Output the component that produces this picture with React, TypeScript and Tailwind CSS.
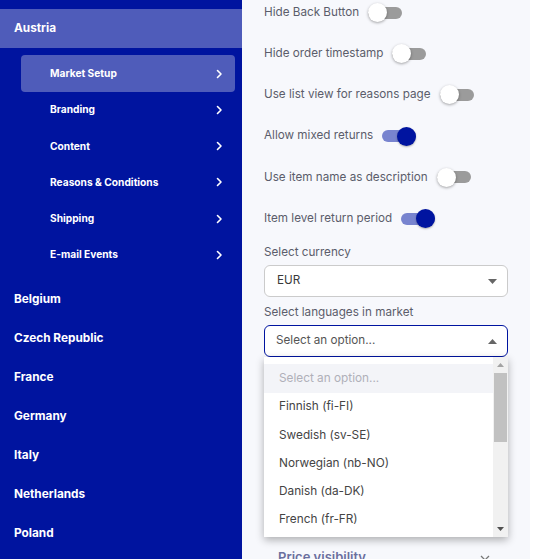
import React from "react";

const subItems = [
  "Market Setup",
  "Branding",
  "Content",
  "Reasons & Conditions",
  "Shipping",
  "E-mail Events",
];

const countries = [
  "Belgium",
  "Czech Republic",
  "France",
  "Germany",
  "Italy",
  "Netherlands",
  "Poland",
];

const toggles: { label: string; on: boolean }[] = [
  { label: "Hide Back Button", on: false },
  { label: "Hide order timestamp", on: false },
  { label: "Use list view for reasons page", on: false },
  { label: "Allow mixed returns", on: true },
  { label: "Use item name as description", on: false },
  { label: "Item level return period", on: true },
];

const languages = [
  "Finnish (fi-FI)",
  "Swedish (sv-SE)",
  "Norwegian (nb-NO)",
  "Danish (da-DK)",
  "French (fr-FR)",
];

function Chevron() {
  return (
    <svg width="7" height="10" viewBox="0 0 7 10" fill="none">
      <path d="M1.5 1.5 L5 5 L1.5 8.5" stroke="white" strokeWidth="1.6" strokeLinecap="round" strokeLinejoin="round" />
    </svg>
  );
}

function Switch({ on }: { on: boolean }) {
  return (
    <div className="relative w-[34px] h-[19px] shrink-0">
      <div
        className={
          on
            ? "absolute left-0 right-0 top-[3.5px] h-[12px] rounded-full bg-[#7884cf]"
            : "absolute left-0 right-0 top-[3.5px] h-[12px] rounded-full bg-[#9b9b9b]"
        }
      />
      <div
        className={
          on
            ? "absolute right-0 top-0 w-[19px] h-[19px] rounded-full bg-[#0014a0] shadow-[0_1px_2px_rgba(0,0,0,0.3)]"
            : "absolute left-0 top-0 w-[19px] h-[19px] rounded-full bg-white shadow-[0_1px_3px_rgba(0,0,0,0.35)]"
        }
      />
    </div>
  );
}

function Caret({ up, color }: { up?: boolean; color: string }) {
  return (
    <svg width="9" height="5" viewBox="0 0 9 5">
      <path d={up ? "M0 5 L4.5 0 L9 5 Z" : "M0 0 L4.5 5 L9 0 Z"} fill={color} />
    </svg>
  );
}

export default function App() {
  return (
    <div
      className="flex w-[535px] h-[559px] overflow-hidden"
      style={{ fontFamily: "Inter, 'Noto Sans', sans-serif" }}
    >
      {/* sidebar */}
      <aside className="w-[242px] shrink-0 bg-[#00149f] text-white pt-[9px]">
        <div className="h-[39px] bg-[#4f5cba] flex items-center pl-[14px] pt-[1px] text-[11.8px] font-bold">
          Austria
        </div>
        <ul className="mt-[7px]">
          {subItems.map((s, i) => (
            <li
              key={s}
              className={
                i === 0
                  ? "ml-[21px] w-[214px] h-[37px] rounded-[4px] bg-[#4f5cba] flex items-center justify-between pl-[29px] pr-[12px] text-[10.2px] font-bold"
                  : "ml-[21px] w-[214px] h-[36.2px] flex items-center justify-between pl-[29px] pr-[12px] text-[10.2px] font-bold"
              }
            >
              <span>{s}</span>
              <Chevron />
            </li>
          ))}
        </ul>
        <ul className="mt-[7px]">
          {countries.map((c) => (
            <li key={c} className="h-[39px] flex items-center pl-[14px] pt-[1px] text-[11.8px] font-bold">
              {c}
            </li>
          ))}
        </ul>
      </aside>

      {/* settings panel */}
      <main className="relative w-[288px] shrink-0 bg-[#f7f8fc] pl-[22px] pr-[22px] text-[#5b5d6b]">
        <div className="-mt-[8px]">
          {toggles.map((t) => (
            <div key={t.label} className="h-[41.2px] flex items-center gap-[9px] text-[11.7px]">
              <span>{t.label}</span>
              <Switch on={t.on} />
            </div>
          ))}
        </div>

        <div className="mt-[4px] leading-[18px] text-[11.7px]">Select currency</div>
        <div className="mt-[4px] h-[32px] rounded-[6px] border border-[#cbcbcb] bg-white flex items-center justify-between pl-[12px] pr-[10px] text-[11.7px] text-[#3a3a3a]">
          <span>EUR</span>
          <Caret color="#666" />
        </div>

        <div className="mt-[6px] leading-[18px] text-[11.7px]">Select languages in market</div>
        <div className="relative mt-[4px] h-[32px] rounded-[6px] border-[1.5px] border-[#0014a0] bg-white flex items-center justify-between pl-[11px] pr-[10px] text-[11.7px] text-[#555]">
          <span>Select an option...</span>
          <Caret up color="#666" />
        </div>

        <div className="mt-[191px] flex items-center justify-between pl-[14px] pr-[18px] text-[13px] font-semibold text-[#6b6f9e]">
          <span>Price visibility</span>
          <svg width="10" height="6" viewBox="0 0 10 6" fill="none">
            <path d="M1 1 L5 5 L9 1" stroke="#777" strokeWidth="1.3" />
          </svg>
        </div>

        {/* open language list */}
        <div className="absolute left-[22px] top-[357px] w-[244px] h-[180px] bg-white shadow-[0_3px_8px_rgba(0,0,0,0.3)] flex">
          <div className="flex-1 pt-[7px]">
            <div className="h-[29px] bg-[#f3f4f8] flex items-center pl-[15px] text-[11.8px] text-[#b0b0b8]">
              Select an option...
            </div>
            {languages.map((l) => (
              <div key={l} className="h-[28.25px] flex items-center pl-[15px] text-[11.8px] text-[#444]">
                {l}
              </div>
            ))}
          </div>
          <div className="w-[15px] h-full bg-[#f1f1f1] flex flex-col items-center">
            <div className="h-[16px] flex items-center">
              <svg width="7" height="4" viewBox="0 0 7 4">
                <path d="M0 4 L3.5 0 L7 4 Z" fill="#a3a3a3" />
              </svg>
            </div>
            <div className="w-[13px] h-[69px] bg-[#c1c1c1]" />
            <div className="flex-1" />
            <div className="h-[16px] flex items-center">
              <svg width="7" height="4" viewBox="0 0 7 4">
                <path d="M0 0 L3.5 4 L7 0 Z" fill="#505050" />
              </svg>
            </div>
          </div>
        </div>
      </main>
      <div className="flex-1 bg-white" />
    </div>
  );
}
